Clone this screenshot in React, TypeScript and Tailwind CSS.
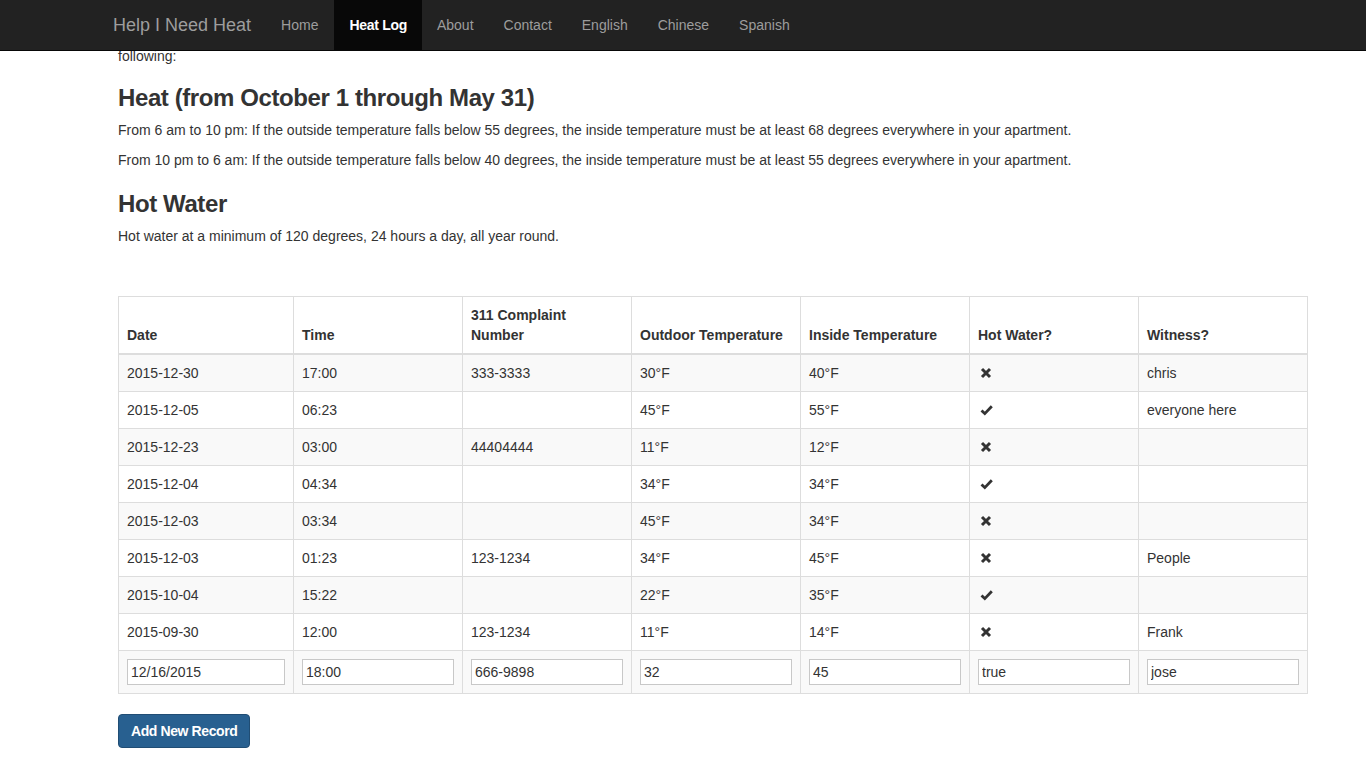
import React from 'react';

type Row = {
  date: string;
  time: string;
  complaint: string;
  outdoor: string;
  inside: string;
  hot: boolean;
  witness: string;
};

const rows: Row[] = [
  { date: '2015-12-30', time: '17:00', complaint: '333-3333', outdoor: '30°F', inside: '40°F', hot: false, witness: 'chris' },
  { date: '2015-12-05', time: '06:23', complaint: '', outdoor: '45°F', inside: '55°F', hot: true, witness: 'everyone here' },
  { date: '2015-12-23', time: '03:00', complaint: '44404444', outdoor: '11°F', inside: '12°F', hot: false, witness: '' },
  { date: '2015-12-04', time: '04:34', complaint: '', outdoor: '34°F', inside: '34°F', hot: true, witness: '' },
  { date: '2015-12-03', time: '03:34', complaint: '', outdoor: '45°F', inside: '34°F', hot: false, witness: '' },
  { date: '2015-12-03', time: '01:23', complaint: '123-1234', outdoor: '34°F', inside: '45°F', hot: false, witness: 'People' },
  { date: '2015-10-04', time: '15:22', complaint: '', outdoor: '22°F', inside: '35°F', hot: true, witness: '' },
  { date: '2015-09-30', time: '12:00', complaint: '123-1234', outdoor: '11°F', inside: '14°F', hot: false, witness: 'Frank' },
];

const navItems = ['Home', 'Heat Log', 'About', 'Contact', 'English', 'Chinese', 'Spanish'];

// glyphicon-remove / glyphicon-ok lookalikes
const RemoveIcon = () => (
  <svg width="12" height="12" viewBox="0 0 12 12" className="inline-block">
    <path d="M2 2 L10 10 M10 2 L2 10" stroke="#333" strokeWidth="3" strokeLinecap="butt" />
  </svg>
);

const OkIcon = () => (
  <svg width="13" height="12" viewBox="0 0 13 12" className="inline-block">
    <path d="M1.5 6.5 L4.8 9.6 L11.8 2.2" stroke="#333" strokeWidth="2.8" fill="none" strokeLinejoin="miter" />
  </svg>
);

const cell = 'border border-[#ddd] px-2 py-2 leading-5 align-top';

const App: React.FC = () => {
  const newRecord = ['12/16/2015', '18:00', '666-9898', '32', '45', 'true', 'jose'];

  return (
    <div className="min-h-screen bg-white text-[#333] text-[14px] font-['Liberation_Sans',Arial,sans-serif] overflow-hidden">
      {/* Navbar */}
      <nav className="relative z-10 h-[51px] bg-[#222] border-b border-[#080808]">
        <div className="flex items-center h-[50px] pl-[98px]">
          <span className="px-[15px] text-[18px] leading-5 text-[#9d9d9d]">Help I Need Heat</span>
          {navItems.map((item) => (
            <span
              key={item}
              className={`h-[50px] flex items-center px-[15px] leading-5 ${
                item === 'Heat Log' ? 'bg-[#080808] text-white ml-[1px] font-semibold tracking-[-0.3px]' : 'text-[#9d9d9d]'
              }`}
            >
              {item}
            </span>
          ))}
        </div>
      </nav>

      {/* Main content */}
      <div className="pl-[118px] -mt-[5px]">
        <p className="leading-5">following:</p>

        <h3 className="mt-[19px] text-[24px] leading-[26px] font-bold tracking-[-0.4px]">Heat (from October 1 through May 31)</h3>
        <p className="mt-[9px] leading-5">
          From 6 am to 10 pm: If the outside temperature falls below 55 degrees, the inside temperature must be at least 68 degrees everywhere in your apartment.
        </p>
        <p className="mt-[10px] leading-5">
          From 10 pm to 6 am: If the outside temperature falls below 40 degrees, the inside temperature must be at least 55 degrees everywhere in your apartment.
        </p>

        <h3 className="mt-[21px] text-[24px] leading-[26px] font-bold tracking-[-0.4px]">Hot Water</h3>
        <p className="mt-[9px] leading-5">Hot water at a minimum of 120 degrees, 24 hours a day, all year round.</p>

        <table className="mt-[50px] w-[1190px] table-fixed border-collapse border border-[#ddd]">
          <colgroup>
            <col className="w-[175px]" />
            <col />
            <col />
            <col />
            <col />
            <col />
            <col />
          </colgroup>
          <thead>
            <tr>
              {['Date', 'Time', '311 Complaint Number', 'Outdoor Temperature', 'Inside Temperature', 'Hot Water?', 'Witness?'].map((h) => (
                <th
                  key={h}
                  className="border border-[#ddd] border-b-2 px-2 pt-[7px] pb-2 h-[57px] text-left font-bold leading-5 align-bottom"
                >
                  {h === '311 Complaint Number' ? (
                    <>
                      311 Complaint
                      <br />
                      Number
                    </>
                  ) : (
                    h
                  )}
                </th>
              ))}
            </tr>
          </thead>
          <tbody>
            {rows.map((r, i) => (
              <tr key={i} className={i % 2 === 0 ? 'bg-[#f9f9f9]' : 'bg-white'}>
                <td className={cell}>{r.date}</td>
                <td className={cell}>{r.time}</td>
                <td className={cell}>{r.complaint}</td>
                <td className={cell}>{r.outdoor}</td>
                <td className={cell}>{r.inside}</td>
                <td className={cell}>
                  <span className="flex h-5 items-center pl-[2px]">{r.hot ? <OkIcon /> : <RemoveIcon />}</span>
                </td>
                <td className={cell}>{r.witness}</td>
              </tr>
            ))}
            <tr className="bg-[#f9f9f9]">
              {newRecord.map((v, i) => (
                <td key={i} className="border border-[#ddd] px-2 py-2 align-top">
                  <input
                    readOnly
                    value={v}
                    className="block w-full h-[26px] border border-[#c8c8c8] bg-white px-[3px] text-[14px] text-[#333] outline-none font-['Liberation_Sans',Arial,sans-serif]"
                  />
                </td>
              ))}
            </tr>
          </tbody>
        </table>

        <button className="mt-[20px] h-[34px] px-3 rounded bg-[#286090] border border-[#204d74] text-white text-[14px] leading-5 font-semibold tracking-[-0.4px]">
          Add New Record
        </button>
      </div>
    </div>
  );
};

export default App;
